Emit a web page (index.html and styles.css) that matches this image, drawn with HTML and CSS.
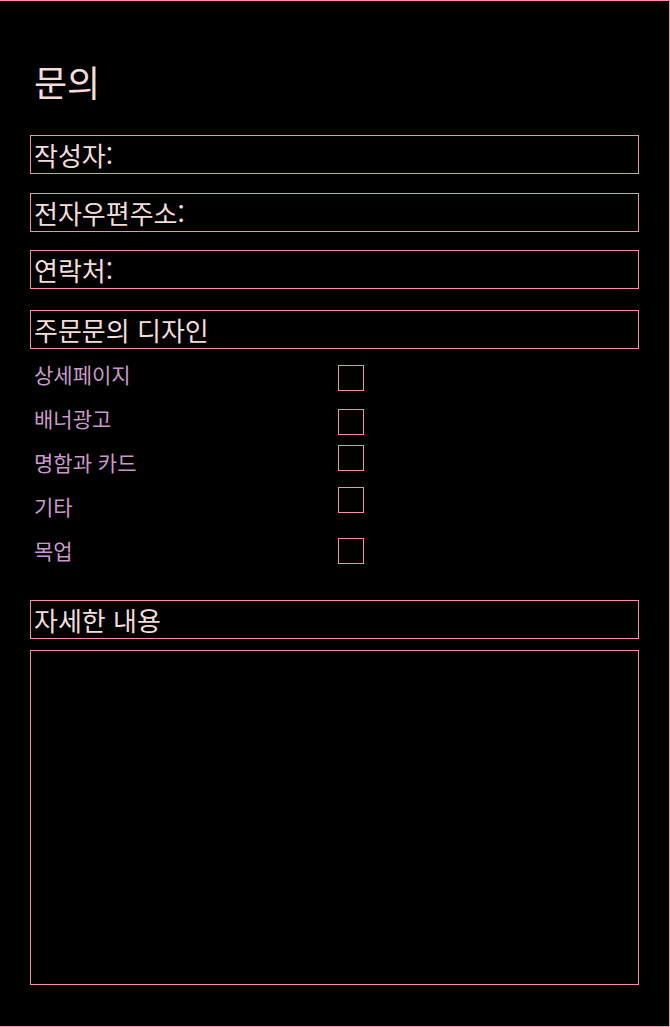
FILE: index.html
```html
<!DOCTYPE html>
<html lang="ko">
	<head>
		<meta charset="utf-8">
		<title>문의</title>
		<link rel="stylesheet" href="styles.css">
	</head>
	<body>
	<div class="page">
		<h1 class="title">문의</h1>
		<form class="inquiry">
			<div class="field">작성자:</div>
			<div class="field">전자우편주소:</div>
			<div class="field contact">연락처:</div>
			<div class="field">주문문의 디자인</div>
			<ul class="options">
				<li><label>상세페이지</label><span class="box"></span></li>
				<li><label>배너광고</label><span class="box"></span></li>
				<li><label>명함과 카드</label><span class="box"></span></li>
				<li><label>기타</label><span class="box"></span></li>
				<li><label>목업</label><span class="box"></span></li>
			</ul>
			<div class="field">자세한 내용</div>
			<div class="message"></div>
		</form>
	</div>
	</body>
</html>
```

FILE: styles.css
```css
html, body {
	margin: 0;
	padding: 0;
	background: #000;
}
body {
	font-family: "Noto Sans CJK KR", "Noto Sans", sans-serif;
}
.page {
	box-sizing: border-box;
	height: 1027px;
	border-top: 1px solid #f48fb1;
	border-right: 1px solid #f48fb1;
	border-bottom: 1px solid #f48fb1;
	padding: 0 30px 0 30px;
}
.title {
	margin: 0;
	padding: 56px 0 0 4px;
	font-size: 36px;
	font-weight: normal;
	line-height: 48px;
	color: #f3dcdc;
}
.inquiry {
	display: flex;
	flex-direction: column;
	margin-top: 30px;
}
.field {
	box-sizing: border-box;
	height: 39px;
	border: 1px solid #f48fb1;
	padding: 0 3px;
	font-size: 26px;
	line-height: 37px;
	color: #f3dcdc;
	margin-bottom: 19px;
	white-space: nowrap;
}
.field.contact {
	margin-top: -1px;
	margin-bottom: 21px;
}
.options {
	list-style: none;
	margin: -14px 0 26px 0;
	padding: 0;
}
.options li {
	display: flex;
	align-items: center;
	height: 44px;
	padding-left: 4px;
}
.options label {
	width: 304px;
	margin-top: -5px;
	font-size: 21px;
	color: #c89ac8;
	white-space: nowrap;
}
.box {
	box-sizing: border-box;
	width: 26px;
	height: 26px;
	border: 1px solid #f48fb1;
}
.options li:nth-child(1) .box { margin-top: 4px; }
.options li:nth-child(2) .box { margin-top: 4px; }
.options li:nth-child(3) .box { margin-top: -12px; }
.options li:nth-child(4) .box { margin-top: -16px; }
.options li:nth-child(5) .box { margin-top: -2px; }
.message {
	box-sizing: border-box;
	height: 335px;
	border: 1px solid #f48fb1;
	margin-top: -8px;
}
```
